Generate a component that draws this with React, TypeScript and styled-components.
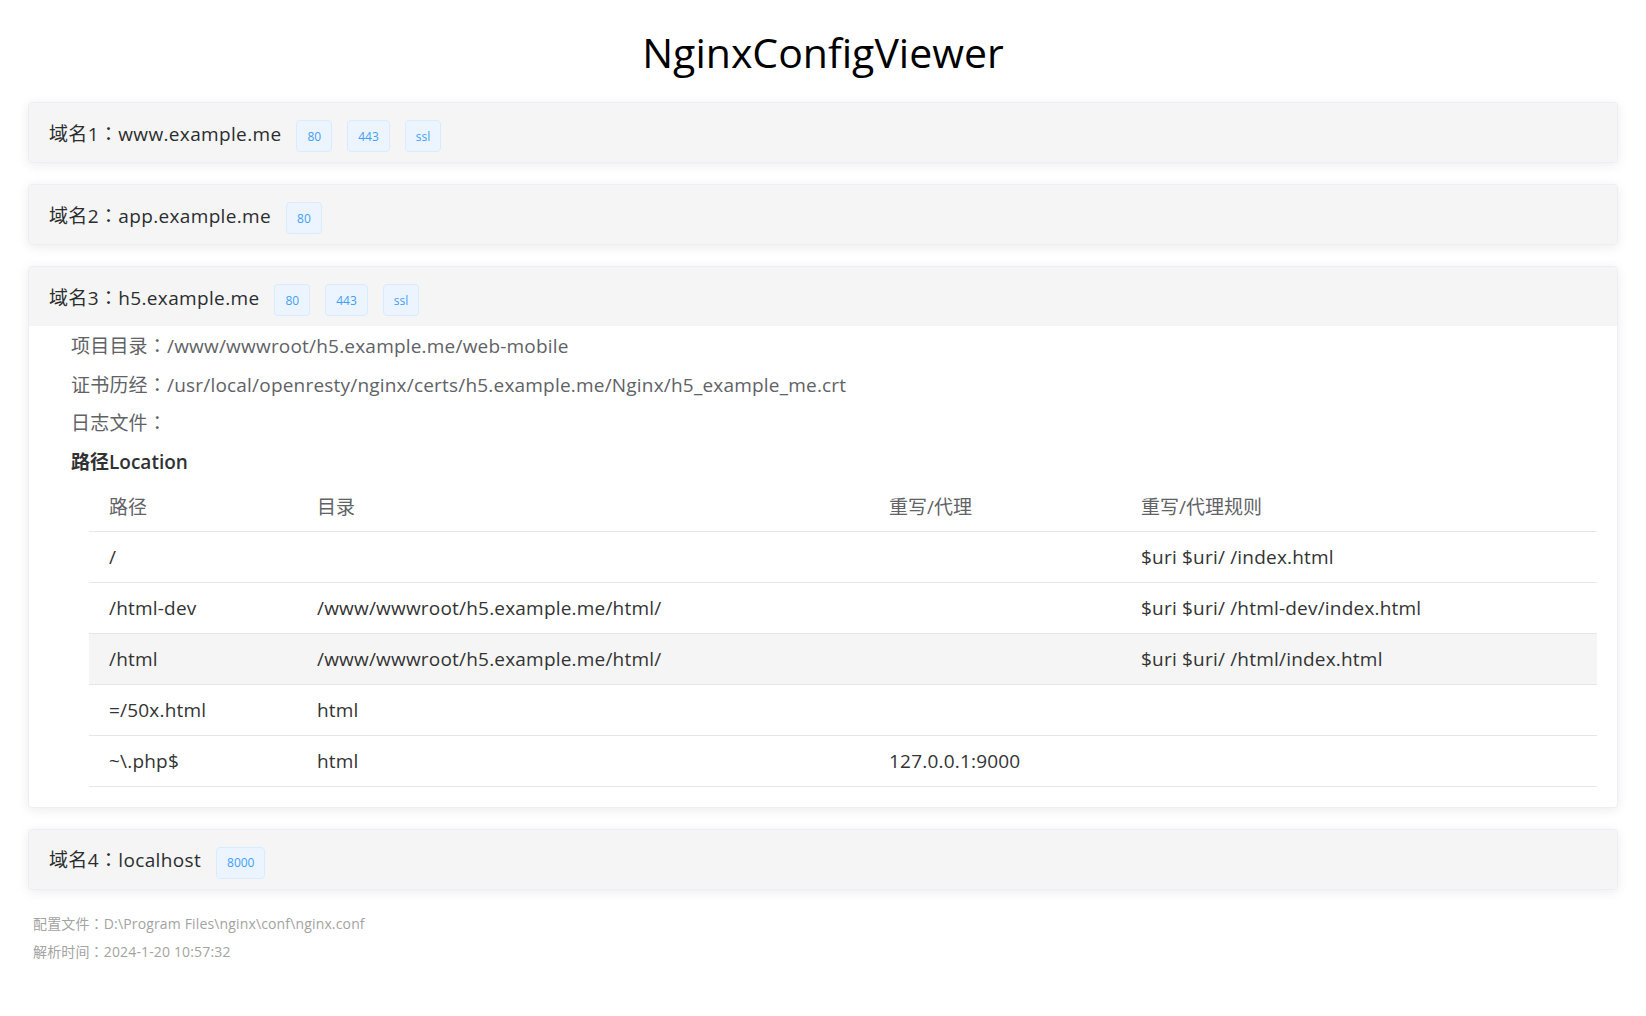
import React from "react";
import styled, { createGlobalStyle } from "styled-components";

const GlobalStyle = createGlobalStyle`
  html, body {
    margin: 0;
    padding: 0;
    background: #ffffff;
  }
  body {
    font-family: "Open Sans", "Noto Sans CJK SC", sans-serif;
    color: #303133;
  }
`;

const Page = styled.div`
  padding: 25px 28px 40px 28px;
`;

const Title = styled.h1`
  margin: 0 0 23px 0;
  text-align: center;
  font-size: 41px;
  line-height: 54px;
  font-weight: 400;
  color: #000000;
`;

const CardList = styled.div`
  display: flex;
  flex-direction: column;
  gap: 21px;
`;

const Card = styled.section`
  border: 1px solid #ebeef5;
  border-radius: 4px;
  background: #ffffff;
  box-shadow: 0 2px 12px 0 rgba(0, 0, 0, 0.08);
  overflow: hidden;
`;

const CardHeader = styled.div`
  display: flex;
  align-items: center;
  gap: 15px;
  height: 59px;
  padding: 0 20px;
  background: #f5f5f5;
`;

const DomainName = styled.span`
  font-size: 19px;
  letter-spacing: 0.35px;
  color: #2b2d30;
`;

const Colon = styled.span`
  font-family: "Noto Sans CJK TC", "Noto Sans CJK SC", sans-serif;
  line-height: 1;
`;

const Tag = styled.span`
  display: inline-flex;
  align-items: center;
  box-sizing: border-box;
  height: 32px;
  margin-top: 7px;
  padding: 0 10px;
  font-size: 12px;
  color: #409eff;
  background: #ecf5ff;
  border: 1px solid #d9ecff;
  border-radius: 4px;
`;

const CardBody = styled.div`
  padding: 1px 20px 20px 20px;
`;

const InfoLine = styled.div<{ $strong?: boolean }>`
  height: 38.5px;
  padding-left: 22px;
  font-size: 19px;
  line-height: 38.5px;
  letter-spacing: ${(p) => (p.$strong ? "0" : "0.2px")};
  color: ${(p) => (p.$strong ? "#303133" : "#606266")};
  font-weight: ${(p) => (p.$strong ? 600 : 400)};
`;

const Table = styled.table`
  margin-left: 40px;
  width: calc(100% - 40px);
  border-collapse: collapse;
  table-layout: fixed;
  font-size: 19px;
  letter-spacing: 0.2px;
`;

const HeadCell = styled.th<{ $width?: number }>`
  box-sizing: border-box;
  width: ${(p) => (p.$width ? `${p.$width}px` : "auto")};
  height: 50px;
  padding: 0 20px;
  text-align: left;
  font-weight: 400;
  letter-spacing: 0;
  color: #606266;
  border-bottom: 1px solid #e6e6e6;
`;

const Row = styled.tr<{ $hover?: boolean }>`
  background: ${(p) => (p.$hover ? "#f5f5f5" : "transparent")};
`;

const Cell = styled.td`
  box-sizing: border-box;
  height: 51px;
  padding: 0 20px;
  color: #333333;
  border-bottom: 1px solid #e6e6e6;
  white-space: nowrap;
`;

const Footer = styled.div`
  margin-top: 20px;
  padding-left: 5px;
  font-size: 14px;
  line-height: 28px;
  letter-spacing: 0.15px;
  color: #a3a3a3;
`;

const FooterLine = styled.div`
  height: 28px;
`;

type Loc = { path: string; dir: string; proxy: string; rule: string; hover?: boolean };

type Server = { label: string; host: string; tags: string[]; open?: boolean };

const servers: Server[] = [
  { label: "域名1", host: "www.example.me", tags: ["80", "443", "ssl"] },
  { label: "域名2", host: "app.example.me", tags: ["80"] },
  { label: "域名3", host: "h5.example.me", tags: ["80", "443", "ssl"], open: true },
  { label: "域名4", host: "localhost", tags: ["8000"] },
];

const locations: Loc[] = [
  { path: "/", dir: "", proxy: "", rule: "$uri $uri/ /index.html" },
  { path: "/html-dev", dir: "/www/wwwroot/h5.example.me/html/", proxy: "", rule: "$uri $uri/ /html-dev/index.html" },
  { path: "/html", dir: "/www/wwwroot/h5.example.me/html/", proxy: "", rule: "$uri $uri/ /html/index.html", hover: true },
  { path: "=/50x.html", dir: "html", proxy: "", rule: "" },
  { path: "~\\.php$", dir: "html", proxy: "127.0.0.1:9000", rule: "" },
];

function Pair({ label, value }: { label: string; value: string }) {
  return (
    <>
      {label}
      <Colon>：</Colon>
      {value}
    </>
  );
}

function Details() {
  return (
    <CardBody>
      <InfoLine>
        <Pair label="项目目录" value="/www/wwwroot/h5.example.me/web-mobile" />
      </InfoLine>
      <InfoLine>
        <Pair label="证书历经" value="/usr/local/openresty/nginx/certs/h5.example.me/Nginx/h5_example_me.crt" />
      </InfoLine>
      <InfoLine>
        <Pair label="日志文件" value="" />
      </InfoLine>
      <InfoLine $strong>路径Location</InfoLine>
      <Table>
        <thead>
          <tr>
            <HeadCell $width={208}>路径</HeadCell>
            <HeadCell $width={572}>目录</HeadCell>
            <HeadCell $width={252}>重写/代理</HeadCell>
            <HeadCell>重写/代理规则</HeadCell>
          </tr>
        </thead>
        <tbody>
          {locations.map((l) => (
            <Row key={l.path} $hover={l.hover}>
              <Cell>{l.path}</Cell>
              <Cell>{l.dir}</Cell>
              <Cell>{l.proxy}</Cell>
              <Cell>{l.rule}</Cell>
            </Row>
          ))}
        </tbody>
      </Table>
    </CardBody>
  );
}

export default function App() {
  return (
    <Page>
      <GlobalStyle />
      <Title>NginxConfigViewer</Title>
      <CardList>
        {servers.map((s) => (
          <Card key={s.label}>
            <CardHeader>
              <DomainName>
                <Pair label={s.label} value={s.host} />
              </DomainName>
              {s.tags.map((t) => (
                <Tag key={t}>{t}</Tag>
              ))}
            </CardHeader>
            {s.open && <Details />}
          </Card>
        ))}
      </CardList>
      <Footer>
        <FooterLine>
          <Pair label="配置文件" value="D:\Program Files\nginx\conf\nginx.conf" />
        </FooterLine>
        <FooterLine>
          <Pair label="解析时间" value="2024-1-20 10:57:32" />
        </FooterLine>
      </Footer>
    </Page>
  );
}
